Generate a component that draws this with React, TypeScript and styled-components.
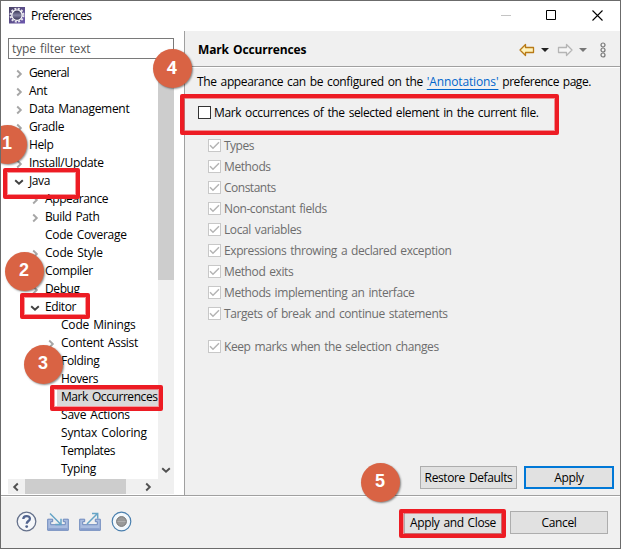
import React from 'react';
import styled, { createGlobalStyle, css } from 'styled-components';

const Global = createGlobalStyle`
  * { box-sizing: border-box; }
  body { margin: 0; background: #fff; }
`;

const Window = styled.div`
  position: relative;
  width: 621px;
  height: 549px;
  overflow: hidden;
  display: flex;
  flex-direction: column;
  border: 1px solid #6b6b6b;
  background: #f0f0f0;
  color: #000;
  font: 12px/18px "Open Sans", "Noto Sans", sans-serif;
  letter-spacing: -0.4px;
  word-spacing: 1.2px;
  white-space: nowrap;
`;

const Text = styled.span<{ $ls?: number }>`
  ${(p) => p.$ls !== undefined && css`letter-spacing: ${p.$ls}px;`}
`;

const TitleBar = styled.header`
  flex: none;
  height: 30px;
  padding: 0 17px 0 8px;
  display: flex;
  align-items: center;
  background: #fff;
  > svg { margin-top: -1px; }
`;
const TitleText = styled(Text)`
  margin-left: 5px;
  flex: 1;
`;
const WindowButtons = styled.div`
  display: flex;
  align-items: center;
  gap: 35px;
  margin-top: -2px;
  svg { display: block; }
`;

const Body = styled.main`
  flex: none;
  height: 465px;
  display: flex;
  border-bottom: 1px solid #a0a0a0;
`;

const Sidebar = styled.nav`
  flex: none;
  width: 184px;
  padding: 7px 10px 0 7px;
  background: #fff;
  border-right: 1px solid #a0a0a0;
`;
const FilterBox = styled.div`
  width: 166px;
  height: 21px;
  margin-bottom: 1px;
  padding-left: 3px;
  border: 1px solid #7a7a7a;
  color: #555;
  line-height: 19px;
`;
const TreeArea = styled.div`
  display: grid;
  width: 166px;
  grid-template-columns: 150px 16px;
  grid-template-rows: 419px 15px;
`;
const Tree = styled.div`
  padding-top: 4px;
  overflow: hidden;
`;
const TreeRow = styled.div<{ $level: number }>`
  height: 18px;
  padding-left: ${(p) => 6 + p.$level * 16}px;
  display: flex;
  align-items: center;
`;
const Expander = styled.span`
  flex: none;
  width: 11px;
  display: flex;
  margin-top: 2px;
`;
const RowLabel = styled(Text)<{ $selected?: boolean }>`
  height: 18px;
  line-height: 17px;
  padding-left: 4px;
  ${(p) => p.$selected && css`background: #d9d9d9; flex: 1;`}
`;
const VScroll = styled.div`
  background: #f0f0f0;
  display: flex;
  flex-direction: column;
  justify-content: space-between;
  align-items: center;
  padding-bottom: 4px;
`;
const VThumb = styled.div`
  width: 16px;
  height: 220px;
  background: #cdcdcd;
`;
const HScroll = styled.div`
  grid-column: span 2;
  background: #f0f0f0;
  display: flex;
  align-items: center;
  padding-left: 3px;
`;
const HThumb = styled.div`
  width: 101px;
  height: 15px;
  margin: 0 17px 0 4px;
  background: #cdcdcd;
`;

const Page = styled.section`
  flex: 1;
  display: flex;
  flex-direction: column;
`;
const PageHeader = styled.div`
  height: 37px;
  padding: 0 14px 0 13px;
  border-bottom: 1px solid #fff;
  box-shadow: inset 0 -1px #a0a0a0;
  display: flex;
  align-items: center;
  justify-content: space-between;
`;
const Heading = styled.h1`
  margin: 2px 0 0;
  font: 700 12px/18px "Open Sans", "Noto Sans", sans-serif;
  letter-spacing: -0.15px;
`;
const Toolbar = styled.div`
  display: flex;
  align-items: center;
  height: 20px;
  margin-top: 1px;
`;
const Intro = styled.p`
  margin: 5px 0 0 12px;
`;
const Link = styled.a`
  color: #0066cc;
  letter-spacing: -0.13px;
  text-decoration: underline;
  text-decoration-thickness: 1px;
  text-underline-offset: 3px;
`;
const CheckRow = styled.label<{ $disabled?: boolean; $main?: boolean; $last?: boolean }>`
  display: flex;
  align-items: center;
  height: 21px;
  gap: 3px;
  margin-left: ${(p) => (p.$main ? 13 : 23)}px;
  margin-top: ${(p) => (p.$main ? 11 : p.$last ? 12 : 0)}px;
  margin-bottom: ${(p) => (p.$main ? 12 : 0)}px;
  color: ${(p) => (p.$disabled ? '#6d6d6d' : '#000')};
`;
const Box = styled.span<{ $disabled?: boolean }>`
  width: 13px;
  height: 13px;
  border: 1px solid ${(p) => (p.$disabled ? '#c8c8c8' : '#333')};
  background: #fff;
  svg { display: block; }
`;
const PageActions = styled.div`
  margin-top: auto;
  display: flex;
  justify-content: flex-end;
  gap: 7px;
  padding: 0 6px 6px 0;
`;
const Button = styled.button<{ $w: number; $default?: boolean }>`
  width: ${(p) => p.$w}px;
  height: 23px;
  padding: 0;
  border: ${(p) => (p.$default ? '2px solid #0078d7' : '1px solid #adadad')};
  background: #e1e1e1;
  color: #000;
  font: inherit;
  line-height: 18px;
  letter-spacing: -0.38px;
  word-spacing: inherit;
`;

const Footer = styled.footer`
  flex: 1;
  border-top: 1px solid #fff;
  display: flex;
  align-items: center;
  justify-content: space-between;
  padding: 0 12px 0 15px;
`;
const FooterIcons = styled.div`
  display: flex;
  gap: 10px;
  padding-bottom: 3px;
  svg { display: block; }
`;
const FooterButtons = styled.div`
  display: flex;
  gap: 8px;
`;

const Highlight = styled.div<{ $x: number; $y: number; $w: number; $h: number }>`
  position: absolute;
  left: ${(p) => p.$x - 1}px;
  top: ${(p) => p.$y - 1}px;
  width: ${(p) => p.$w}px;
  height: ${(p) => p.$h}px;
  border: 4px solid #ed1c24;
  border-radius: 2px;
  box-shadow: inset 0 0 0 1px rgba(237, 28, 36, 0.45);
`;
const Badge = styled.div<{ $x: number; $y: number; $humanist?: boolean }>`
  position: absolute;
  left: ${(p) => p.$x - 20.5}px;
  top: ${(p) => p.$y - 20.5}px;
  width: 39px;
  height: 39px;
  border-radius: 50%;
  background: #d96344;
  box-shadow: 1px 1px 2px rgba(0, 0, 0, 0.45);
  color: #fff;
  font: 700 18px/37px ${(p) => (p.$humanist ? '"Open Sans"' : '"Liberation Sans"')}, sans-serif;
  letter-spacing: 0;
  text-align: center;
`;

type Dir = 'left' | 'right' | 'down';
const PATHS: Record<Dir, string> = {
  left: 'M6.8 1.5 3.2 5l3.6 3.5',
  right: 'M3.2 1.5 6.8 5 3.2 8.5',
  down: 'M1.2 3.2 5 6.8l3.8-3.6',
};
const Chevron = ({ dir, color = '#505050' }: { dir: Dir; color?: string }) => (
  <svg width="10" height="10" viewBox="0 0 10 10" fill="none" stroke={color} strokeWidth="1.9">
    <path d={PATHS[dir]} />
  </svg>
);

const EclipseIcon = () => (
  <svg width="17" height="17" viewBox="0 0 17 17">
    <defs>
      <linearGradient id="ecl" x1="0" y1="0" x2="1" y2="1">
        <stop offset="0" stopColor="#4a4465" />
        <stop offset="1" stopColor="#6d58b0" />
      </linearGradient>
      <linearGradient id="core" x1="0" y1="0" x2="0" y2="1">
        <stop offset="0" stopColor="#2b2747" />
        <stop offset="0.5" stopColor="#8583a3" />
        <stop offset="1" stopColor="#2b2747" />
      </linearGradient>
    </defs>
    <rect width="16" height="16.5" fill="url(#ecl)" />
    <circle cx="8" cy="8.2" r="6.5" fill="none" stroke="#e8e6ed" strokeWidth="2" strokeDasharray="2 1.4" />
    <circle cx="8" cy="8.2" r="5.2" fill="url(#core)" stroke="#fff" strokeWidth="1.2" />
  </svg>
);

const NavArrow = ({ active }: { active?: boolean }) => (
  <svg width="16" height="14" viewBox="0 0 16 14">
    <path
      d={active ? 'M1 7 6.5 1.5v3H14.5v5H6.5v3Z' : 'M15 7 9.5 1.5v3H1.5v5h8v3Z'}
      fill={active ? '#fff3bd' : '#f6f6f6'}
      stroke={active ? '#b87a16' : '#b5b5b5'}
      strokeWidth="1.3"
      strokeLinejoin="round"
    />
  </svg>
);
const Caret = styled.span<{ $color: string; $before: number; $after: number }>`
  margin: 0 ${(p) => p.$after}px 0 ${(p) => p.$before}px;
  border: 4px solid transparent;
  border-top-color: ${(p) => p.$color};
  border-bottom-width: 0;
`;

const Tick = () => (
  <svg width="11" height="11" viewBox="0 0 11 11" fill="none" stroke="#b4b4b4" strokeWidth="1.5">
    <path d="m1 5.2 3 3L10 2.3" />
  </svg>
);

const Tray = ({ out }: { out?: boolean }) => (
  <svg width="22" height="21" viewBox="0 0 22 21">
    <path d="M.7 8.2h5v2.5h-2v3h14.6v-3h-2V8.2h5v11.1H.7Z" fill="#a9bcdf" stroke="#6d89bd" />
    <path d="M1.5 18h19" stroke="#6f88be" />
    <path
      d={out ? 'M8 13 18 3M13 2.5h5.7v5.3' : 'M3 2.5 13.5 13M14 7.7v5.8H8.3'}
      fill="none"
      stroke="#66a4c6"
      strokeWidth="1.5"
    />
  </svg>
);

interface Node { label: string; level: number; dir?: Dir; ls?: number; selected?: boolean }
const NODES: Node[] = [
  { label: 'General', level: 0, dir: 'right', ls: -0.6 },
  { label: 'Ant', level: 0, dir: 'right' },
  { label: 'Data Management', level: 0, dir: 'right', ls: -0.3 },
  { label: 'Gradle', level: 0, dir: 'right' },
  { label: 'Help', level: 0, dir: 'right' },
  { label: 'Install/Update', level: 0, dir: 'right', ls: -0.3 },
  { label: 'Java', level: 0, dir: 'down' },
  { label: 'Appearance', level: 1, dir: 'right' },
  { label: 'Build Path', level: 1, dir: 'right' },
  { label: 'Code Coverage', level: 1, ls: -0.3 },
  { label: 'Code Style', level: 1, dir: 'right', ls: -0.2 },
  { label: 'Compiler', level: 1, dir: 'right' },
  { label: 'Debug', level: 1, dir: 'right' },
  { label: 'Editor', level: 1, dir: 'down' },
  { label: 'Code Minings', level: 2, ls: -0.2 },
  { label: 'Content Assist', level: 2, dir: 'right', ls: -0.3 },
  { label: 'Folding', level: 2, ls: -0.3 },
  { label: 'Hovers', level: 2 },
  { label: 'Mark Occurrences', level: 2, selected: true, ls: -0.42 },
  { label: 'Save Actions', level: 2, ls: -0.2 },
  { label: 'Syntax Coloring', level: 2, ls: -0.17 },
  { label: 'Templates', level: 2, ls: -0.48 },
  { label: 'Typing', level: 2, ls: -0.3 },
];

const OPTIONS: [string, number?][] = [
  ['Types', -0.5],
  ['Methods'],
  ['Constants', -0.5],
  ['Non-constant fields'],
  ['Local variables'],
  ['Expressions throwing a declared exception'],
  ['Method exits'],
  ['Methods implementing an interface'],
  ['Targets of break and continue statements'],
  ['Keep marks when the selection changes'],
];

export default function App() {
  return (
    <>
      <Global />
      <Window>
        <TitleBar>
          <EclipseIcon />
          <TitleText $ls={-0.58}>Preferences</TitleText>
          <WindowButtons>
            <svg width="10" height="11"><path d="M0 5.5h10" stroke="#c4c4c4" /></svg>
            <svg width="11" height="11"><path d="M.5.5h9v9h-9z" fill="none" stroke="#000" /></svg>
            <svg width="11" height="11"><path d="m.5.5 10 10m0-10-10 10" stroke="#000" strokeWidth="1.1" /></svg>
          </WindowButtons>
        </TitleBar>
        <Body>
          <Sidebar>
            <FilterBox><Text $ls={-0.13}>type filter text</Text></FilterBox>
            <TreeArea>
              <Tree>
                {NODES.map((n) => (
                  <TreeRow key={n.label} $level={n.level}>
                    <Expander>
                      {n.dir && <Chevron dir={n.dir} color={n.dir === 'right' ? '#a6a6a6' : '#404040'} />}
                    </Expander>
                    <RowLabel $ls={n.ls} $selected={n.selected}>{n.label}</RowLabel>
                  </TreeRow>
                ))}
              </Tree>
              <VScroll>
                <VThumb />
                <Chevron dir="down" />
              </VScroll>
              <HScroll>
                <Chevron dir="left" />
                <HThumb />
                <Chevron dir="right" />
              </HScroll>
            </TreeArea>
          </Sidebar>
          <Page>
            <PageHeader>
              <Heading>Mark Occurrences</Heading>
              <Toolbar>
                <NavArrow active />
                <Caret $color="#222" $before={6} $after={8} />
                <NavArrow />
                <Caret $color="#777" $before={6} $after={13} />
                <svg width="6" height="16" fill="none" stroke="#777" strokeWidth="1.2">
                  <circle cx="3" cy="3" r="2" />
                  <circle cx="3" cy="8" r="2" />
                  <circle cx="3" cy="13" r="2" />
                </svg>
              </Toolbar>
            </PageHeader>
            <Intro>
              <Text $ls={-0.36}>The appearance can be configured on the </Text>
              <Link>'Annotations'</Link>
              <Text $ls={-0.46}> preference page.</Text>
            </Intro>
            <CheckRow $main>
              <Box />
              <Text $ls={-0.38}>Mark occurrences of the selected element in the current file.</Text>
            </CheckRow>
            {OPTIONS.map(([label, ls], i) => (
              <CheckRow key={label} $disabled $last={i === OPTIONS.length - 1}>
                <Box $disabled><Tick /></Box>
                <Text $ls={ls}>{label}</Text>
              </CheckRow>
            ))}
            <PageActions>
              <Button $w={97}>Restore Defaults</Button>
              <Button $w={90} $default>Apply</Button>
            </PageActions>
          </Page>
        </Body>
        <Footer>
          <FooterIcons>
            <svg width="21" height="21" viewBox="0 0 21 21">
              <circle cx="10.5" cy="10.5" r="9.3" fill="#f5f7fa" stroke="#66728c" strokeWidth="1.3" />
              <path d="M7.3 8.1c0-4 6.6-4 6.6-.4 0 2.4-3.2 2.3-3.2 5.1" fill="none" stroke="#51648f" strokeWidth="2.3" />
              <circle cx="10.7" cy="15.6" r="1.4" fill="#51648f" />
            </svg>
            <Tray />
            <Tray out />
            <svg width="21" height="21" viewBox="0 0 21 21">
              <circle cx="10.5" cy="10.5" r="9.3" fill="#f3f8fc" stroke="#4a7fae" strokeWidth="1.2" />
              <circle cx="10.5" cy="10.5" r="4.9" fill="#999" stroke="#777" />
              <path d="M6.5 10.5h8" stroke="#b0b0b0" />
            </svg>
          </FooterIcons>
          <FooterButtons>
            <Button $w={98}>Apply and Close</Button>
            <Button $w={98}>Cancel</Button>
          </FooterButtons>
        </Footer>
        <Highlight $x={3} $y={168} $w={77} $h={31} />
        <Highlight $x={20} $y={293} $w={70} $h={26} />
        <Highlight $x={50} $y={385} $w={113} $h={26} />
        <Highlight $x={180} $y={94} $w={379} $h={41} />
        <Highlight $x={399} $y={509} $w={107} $h={29} />
        <Badge $x={7} $y={144.5}>1</Badge>
        <Badge $x={24} $y={271}>2</Badge>
        <Badge $x={43} $y={364}>3</Badge>
        <Badge $x={172} $y={68} $humanist>4</Badge>
        <Badge $x={380} $y={482}>5</Badge>
      </Window>
    </>
  );
}
